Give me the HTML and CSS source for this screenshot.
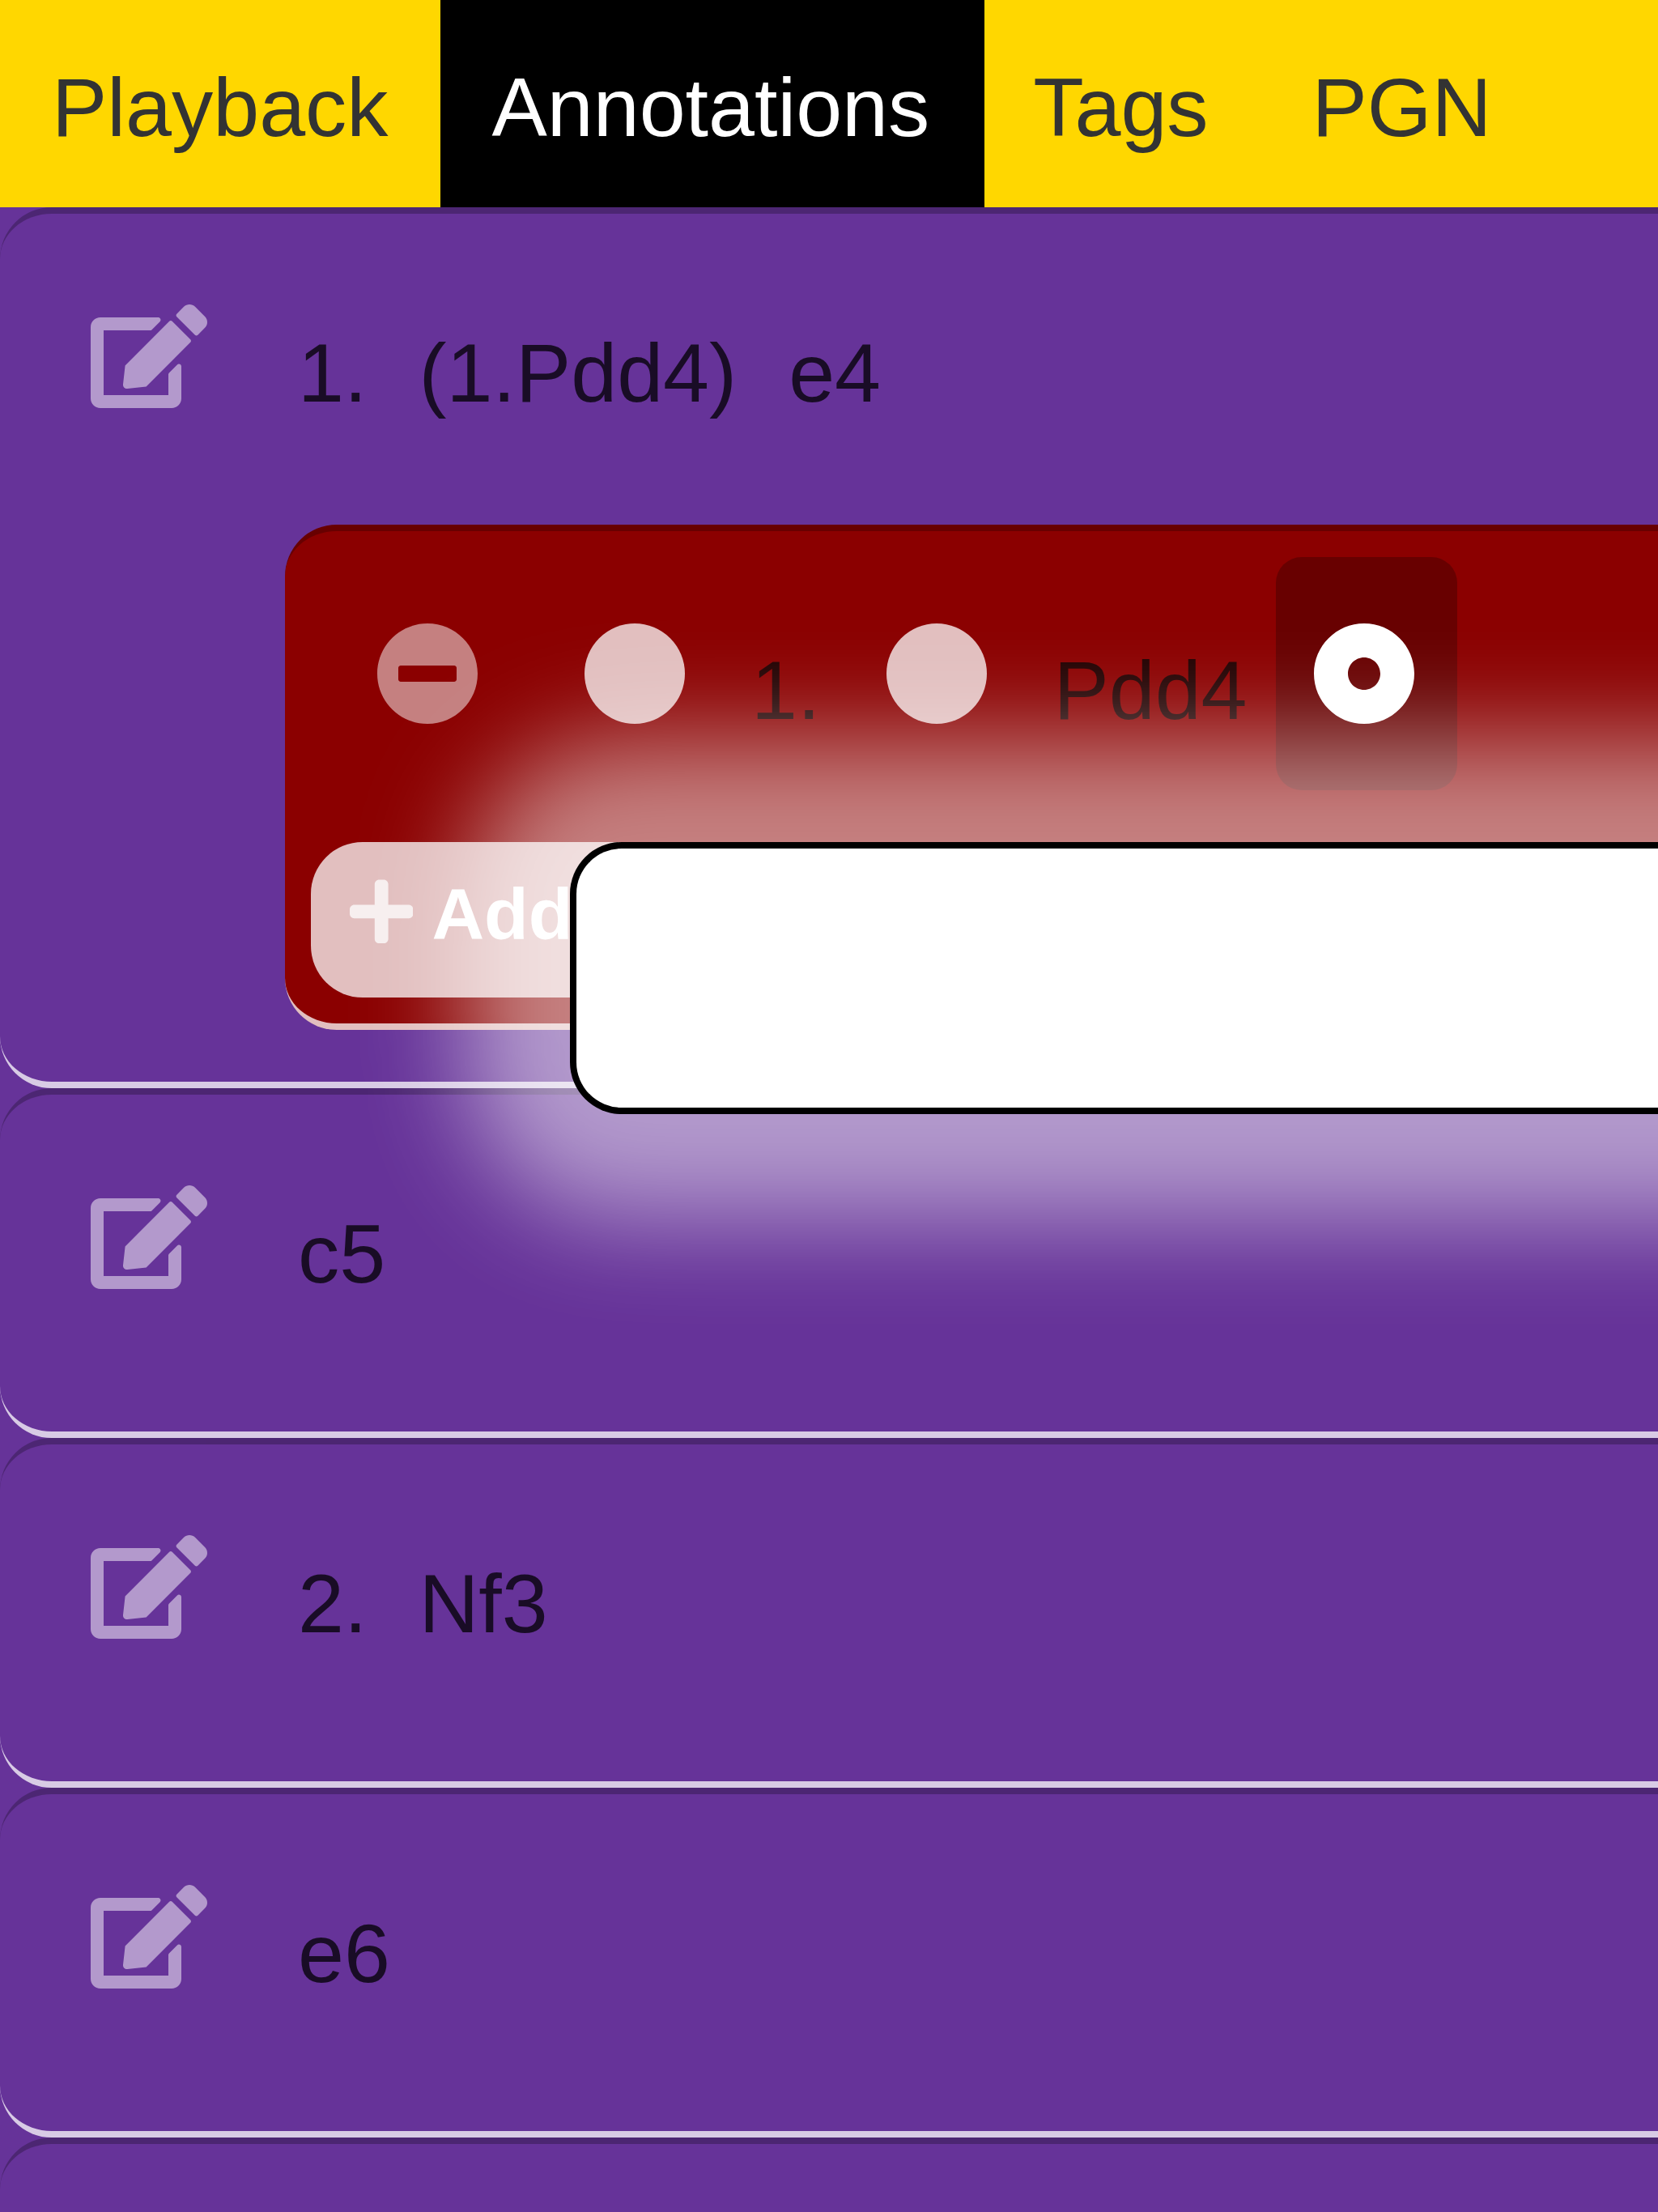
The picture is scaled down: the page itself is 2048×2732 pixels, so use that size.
FILE: index.html
```html
<!DOCTYPE html>
<html lang="en">
<head>
<meta charset="utf-8">
<title>Annotations</title>
<link rel="stylesheet" href="styles.css">
</head>
<body>
<svg class="sprite" aria-hidden="true">
  <symbol id="edit" viewBox="0 0 576 512"><path d="M402.6 83.2l90.2 90.2c3.8 3.8 3.8 10 0 13.8L274.4 405.6l-92.8 10.3c-12.4 1.4-22.9-9.1-21.5-21.5l10.3-92.8L388.8 83.2c3.8-3.8 10-3.8 13.8 0zm162-22.9l-48.8-48.8c-15.2-15.2-39.9-15.2-55.2 0l-35.4 35.4c-3.8 3.8-3.8 10 0 13.8l90.2 90.2c3.8 3.8 10 3.8 13.8 0l35.4-35.4c15.2-15.3 15.2-40 0-55.2zM384 346.2V448H64V128h229.8c3.2 0 6.2-1.3 8.5-3.5l40-40c7.6-7.6 2.2-20.5-8.5-20.5H48C21.5 64 0 85.5 0 112v352c0 26.5 21.5 48 48 48h352c26.5 0 48-21.5 48-48V306.2c0-10.7-12.9-16-20.5-8.5l-40 40c-2.2 2.3-3.5 5.3-3.5 8.5z"/></symbol>
  <symbol id="minus" viewBox="0 0 512 512"><path d="M256 8C119 8 8 119 8 256s111 248 248 248 248-111 248-248S393 8 256 8zM124 296c-6.600 0-12-5.400-12-12v-56c0-6.600 5.400-12 12-12h264c6.600 0 12 5.400 12 12v56c0 6.600-5.400 12-12 12H124z"/></symbol>
  <symbol id="circle" viewBox="0 0 512 512"><circle cx="256" cy="256" r="248"/></symbol>
  <symbol id="dot" viewBox="0 0 512 512"><path d="M256 8C119.033 8 8 119.033 8 256s111.033 248 248 248 248-111.033 248-248S392.967 8 256 8zm80 248c0 44.112-35.888 80-80 80s-80-35.888-80-80 35.888-80 80-80 80 35.888 80 80z"/></symbol>
  <symbol id="plus" viewBox="0 0 448 512"><path d="M416 208H272V64c0-17.670-14.330-32-32-32h-32c-17.670 0-32 14.330-32 32v144H32c-17.670 0-32 14.330-32 32v32c0 17.670 14.330 32 32 32h144v144c0 17.670 14.330 32 32 32h32c17.670 0 32-14.330 32-32V304h144c17.670 0 32-14.330 32-32v-32c0-17.670-14.330-32-32-32z"/></symbol>
</svg>

<nav class="tabs">
  <a class="tab">Playback</a>
  <a class="tab tab-active">Annotations</a>
  <a class="tab">Tags</a>
  <a class="tab">PGN</a>
</nav>

<main class="moves">
  <section class="move">
    <div class="line">
      <span class="btn btn-edit"><svg><use href="#edit"/></svg></span>
      <span class="text">1.</span><span class="text">(1.Pdd4)</span><span class="text">e4</span>
    </div>
    <div class="variation">
      <div class="line">
        <span class="btn btn-remove"><svg><use href="#minus"/></svg></span>
        <span class="btn btn-mark"><svg><use href="#circle"/></svg></span>
        <span class="text">1.</span>
        <span class="btn btn-mark"><svg><use href="#circle"/></svg></span>
        <span class="text">Pdd4</span>
        <span class="btn btn-mark btn-active"><svg><use href="#dot"/></svg></span>
      </div>
      <div class="add"><svg><use href="#plus"/></svg><span>Add</span></div>
      <div class="popup"><div class="dialog"></div></div>
    </div>
  </section>
  <section class="move">
    <div class="line"><span class="btn btn-edit"><svg><use href="#edit"/></svg></span><span class="text">c5</span></div>
  </section>
  <section class="move">
    <div class="line"><span class="btn btn-edit"><svg><use href="#edit"/></svg></span><span class="text">2.</span><span class="text">Nf3</span></div>
  </section>
  <section class="move">
    <div class="line"><span class="btn btn-edit"><svg><use href="#edit"/></svg></span><span class="text">e6</span></div>
  </section>
  <section class="move move-cut"></section>
</main>
</body>
</html>
```

FILE: styles.css
```css
* {
  box-sizing: border-box;
}

html,
body {
  margin: 0;
  height: 2732px;
  overflow: hidden;
}

body {
  background: #663399;
  color: rgba(0, 0, 0, 0.75);
  font: 102.4px/119px "Liberation Sans", Arial, sans-serif;
}

svg {
  display: block;
  fill: #fff;
}

.sprite {
  position: absolute;
  width: 0;
  height: 0;
}

.tabs {
  display: flex;
  height: 256px;
  background: #ffd700;
  color: #333;
}

.tab {
  padding: 73px 64px 64px;
}

/* the active background reaches slightly under the next tab */
.tab-active {
  margin: 0 -4px 0 0.6px;
  padding: 73px 68px 64px 63.4px;
  background: #000;
  color: #fff;
}

.moves {
  display: flex;
  flex-direction: column;
  height: 2476px;
  overflow: hidden;
}

.move,
.variation {
  flex: none;
  padding-bottom: 32px;
  border: solid rgba(0, 0, 0, 0.25);
  border-width: 8px 0;
  border-bottom-color: rgba(255, 255, 255, 0.75);
  border-radius: 64px 0 0 64px;
}

.move-cut {
  flex: 1;
  padding: 0;
  border-bottom: 0;
  border-radius: 64px 0 0 0;
}

.line {
  display: flex;
  align-items: flex-start;
  height: 384px;
  padding: 32px 0 0 64px;
}

.btn {
  flex: none;
  height: 288px;
  padding: 80px 48px;
  border-radius: 32px;
}

.btn svg {
  width: 128px;
  height: 128px;
  opacity: 0.5;
}

.btn-edit {
  margin-right: 32px;
}

.btn-edit svg {
  width: 144px;
}

.btn-remove {
  margin-right: 32px;
}

.btn-mark svg {
  opacity: 0.75;
}

.btn-active {
  margin-left: 3.5px;
  padding: 80px 51.5px 80px 44.5px;
  background: rgba(0, 0, 0, 0.25);
}

.btn-active svg {
  opacity: 1;
}

.text {
  padding: 105px 32px 0;
}

.variation {
  position: relative;
  margin: 0 0 32px 352px;
  background: #8b0000;
}

.move > .line {
  height: 384px;
}

.add {
  display: flex;
  align-items: flex-start;
  gap: 23px;
  width: 480px;
  height: 192px;
  margin-left: 32px;
  padding: 38px 48px 0;
  border-radius: 64px;
  background: rgba(255, 255, 255, 0.75);
  color: #fff;
  font-size: 89.6px;
  font-weight: bold;
  line-height: 102px;
}

.add svg {
  width: 78.4px;
  height: 89.6px;
  margin-top: 3px;
  opacity: 0.75;
}

/* floats over the variation and the next move */
.popup {
  position: absolute;
  top: 384px;
  right: 0;
  left: 352px;
  z-index: 1;
  height: 336px;
}

.popup::before {
  content: "";
  position: absolute;
  inset: -128px -400px -128px -128px;
  border-radius: 192px;
  background: rgba(255, 255, 255, 0.5);
  filter: blur(64px);
}

.dialog {
  position: relative;
  height: 100%;
  border: 8px solid #000;
  border-right: 0;
  border-radius: 64px 0 0 64px;
  background: #fff;
}
```
